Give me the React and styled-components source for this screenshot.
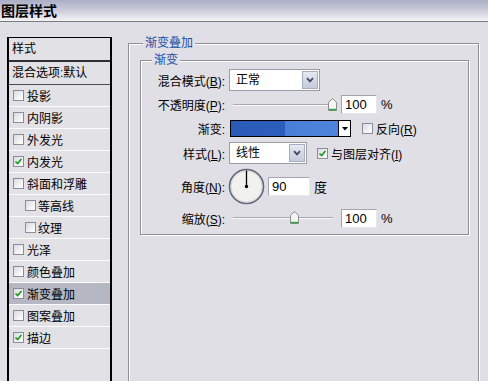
import React from 'react';
import styled, { createGlobalStyle } from 'styled-components';

const FONT = '"Liberation Sans", "Noto Sans CJK SC", sans-serif';

const GlobalStyle = createGlobalStyle`
  body {
    margin: 0;
    background: #e0dfe5;
    font-family: ${FONT};
  }
`;

const LAYERS = [
  { name: '投影' },
  { name: '内阴影' },
  { name: '外发光' },
  { name: '内发光', checked: true },
  { name: '斜面和浮雕' },
  { name: '等高线', indent: true },
  { name: '纹理', indent: true },
  { name: '光泽' },
  { name: '颜色叠加' },
  { name: '渐变叠加', checked: true, selected: true },
  { name: '图案叠加' },
  { name: '描边', checked: true },
];

const CheckBox = ({ checked }) => (
  <Box>
    {checked && (
      <svg width="9" height="9" viewBox="0 0 9 9">
        <path d="M1.5 4.5 L3.6 6.6 L7.5 2" fill="none" stroke="#1f9a22" strokeWidth="1.7" />
      </svg>
    )}
  </Box>
);

const Select = ({ value, width }) => (
  <SelectBox $w={width}>
    <SelectText>{value}</SelectText>
    <SelectButton>
      <svg width="8" height="6" viewBox="0 0 8 6">
        <path d="M1 1.2 L4 4.4 L7 1.2" fill="none" stroke="#3c4a6c" strokeWidth="1.8" />
      </svg>
    </SelectButton>
  </SelectBox>
);

const Slider = ({ value, width }) => (
  <SliderBox $w={width}>
    <Track />
    <Thumb style={{ left: `${value}px` }}>
      <svg width="9" height="13" viewBox="0 0 9 13">
        <path d="M0.5 4.2 L4.5 0.6 L8.5 4.2 V12.5 H0.5 Z" fill="#f4f4f0" stroke="#8b8d90" />
        <path d="M1 11.6 H8" stroke="#2fa640" strokeWidth="1.6" />
      </svg>
    </Thumb>
  </SliderBox>
);

const AngleDial = () => (
  <svg width="37" height="37" viewBox="0 0 37 37">
    <circle cx="18.5" cy="18.5" r="17" fill="#f1f1ee" stroke="#5f6478" strokeWidth="1.6" />
    <circle cx="18.5" cy="18.5" r="15.6" fill="none" stroke="#c9cad2" strokeWidth="0.8" />
    <line x1="18.5" y1="18.5" x2="18.5" y2="2.5" stroke="#000" strokeWidth="1.3" />
    <circle cx="18.5" cy="18.5" r="1.7" fill="#000" />
  </svg>
);

const App = () => (
  <>
    <GlobalStyle />
    <Dialog>
      <TitleBar>图层样式</TitleBar>
      <Body>
        <StylePanel>
          <PanelHeader>样式</PanelHeader>
          <BlendRow>混合选项:默认</BlendRow>
          {LAYERS.map((l) => (
            <ListRow key={l.name} $indent={l.indent} $selected={l.selected}>
              <CheckBox checked={l.checked} />
              <span>{l.name}</span>
            </ListRow>
          ))}
        </StylePanel>

        <OuterGroup>
          <GroupLegend $ml={3}>渐变叠加</GroupLegend>
          <InnerGroup>
            <GroupLegend $ml={11}>渐变</GroupLegend>

            <FormRow $h={24}>
              <FieldLabel>
                混合模式(<u>B</u>):
              </FieldLabel>
              <Control $ml={4}>
                <Select value="正常" width={91} />
              </Control>
            </FormRow>

            <FormRow $h={25}>
              <FieldLabel>
                不透明度(<u>P</u>):
              </FieldLabel>
              <Control $ml={8}>
                <Slider value={95} width={104} />
              </Control>
              <NumInput $ml={4} $w={36}>100</NumInput>
              <Unit>%</Unit>
            </FormRow>

            <FormRow $h={23}>
              <FieldLabel>渐变:</FieldLabel>
              <Control $ml={5}>
                <GradientBar />
                <GradientArrow>
                  <svg width="6" height="4" viewBox="0 0 6 4">
                    <path d="M0 0 H6 L3 3.5 Z" fill="#000" />
                  </svg>
                </GradientArrow>
              </Control>
              <Control $ml={11}>
                <CheckBox />
                <CheckLabel>
                  反向(<u>R</u>)
                </CheckLabel>
              </Control>
            </FormRow>

            <FormRow $h={26}>
              <FieldLabel>
                样式(<u>L</u>):
              </FieldLabel>
              <Control $ml={4}>
                <Select value="线性" width={78} />
              </Control>
              <Control $ml={10}>
                <CheckBox checked />
                <CheckLabel>
                  与图层对齐(<u>I</u>)
                </CheckLabel>
              </Control>
            </FormRow>

            <FormRow $h={41}>
              <FieldLabel>
                角度(<u>N</u>):
              </FieldLabel>
              <Control $ml={3}>
                <AngleDial />
              </Control>
              <NumInput $ml={3} $w={42}>90</NumInput>
              <Unit>度</Unit>
            </FormRow>

            <FormRow $h={22}>
              <FieldLabel>
                缩放(<u>S</u>):
              </FieldLabel>
              <Control $ml={8}>
                <Slider value={57} width={104} />
              </Control>
              <NumInput $ml={4} $w={36}>100</NumInput>
              <Unit>%</Unit>
            </FormRow>
          </InnerGroup>
        </OuterGroup>
      </Body>
    </Dialog>
  </>
);

const Dialog = styled.div`
  width: 488px;
  height: 381px;
  overflow: hidden;
  display: flex;
  flex-direction: column;
  background: #e0dfe5;
  color: #000;
  font-size: 12px;
`;

const TitleBar = styled.div`
  height: 21px;
  flex-shrink: 0;
  padding-left: 1px;
  line-height: 21px;
  font-size: 14px;
  font-weight: bold;
  font-family: "Noto Sans CJK SC", sans-serif;
  background: linear-gradient(to bottom, #abaec5 0%, #cfd0dc 55%, #f5f5f8 100%);
  border-bottom: 1px solid #7b7b83;
`;

const Body = styled.div`
  display: flex;
  align-items: flex-start;
  flex: 1;
  min-height: 0;
  padding-left: 7px;
`;

const StylePanel = styled.div`
  flex-shrink: 0;
  box-sizing: border-box;
  width: 105px;
  height: 400px;
  margin-top: 15px;
  display: flex;
  flex-direction: column;
  background: #e2e1e6;
  border-top: 1px solid #000;
  border-left: 2px solid #000;
  border-right: 2px solid #000;
`;

const PanelHeader = styled.div`
  height: 22px;
  line-height: 22px;
  padding-left: 3px;
  border-bottom: 2px solid #2e2e33;
`;

const BlendRow = styled.div`
  height: 22px;
  line-height: 22px;
  padding-left: 3px;
  border-bottom: 1px solid #4a4a52;
`;

const ListRow = styled.div`
  height: 21px;
  display: flex;
  align-items: center;
  gap: ${(p) => (p.$indent ? 2 : 3)}px;
  padding-left: ${(p) => (p.$indent ? 16 : 4)}px;
  border-bottom: 1px solid #fbfbfd;
  background: ${(p) => (p.$selected ? '#b5b7c3' : 'transparent')};
`;

const Box = styled.span`
  box-sizing: border-box;
  width: 11px;
  height: 11px;
  flex-shrink: 0;
  display: inline-flex;
  align-items: center;
  justify-content: center;
  border: 1px solid #8a8c9c;
  background: linear-gradient(135deg, #d9d9df 0%, #f6f6f8 70%, #ffffff 100%);
`;

const OuterGroup = styled.fieldset`
  flex-shrink: 0;
  box-sizing: border-box;
  width: 351px;
  height: 380px;
  margin: 14px 0 0 16px;
  padding: 2px 9px 0 11px;
  min-width: 0;
  border: 1px solid #8f8f98;
  box-shadow: inset 1px 1px 0 #fff, 1px 1px 0 #fff;
`;

const GroupLegend = styled.legend`
  margin-left: ${(p) => p.$ml}px;
  padding: 0 2px;
  line-height: 15px;
  font-size: 12px;
  color: #1d4ea6;
  background: #e0dfe5;
`;

const InnerGroup = styled.fieldset`
  box-sizing: border-box;
  width: 329px;
  margin: 0;
  padding: 0 0 5px 0;
  min-width: 0;
  border: 1px solid #8f8f98;
  box-shadow: inset 1px 1px 0 #fff, 1px 1px 0 #fff;
`;

const FormRow = styled.div`
  height: ${(p) => p.$h}px;
  display: flex;
  align-items: center;
`;

const FieldLabel = styled.span`
  width: 84px;
  flex-shrink: 0;
  text-align: right;
  white-space: nowrap;
`;

const Control = styled.div`
  display: flex;
  align-items: center;
  margin-left: ${(p) => p.$ml}px;
`;

const SelectBox = styled.div`
  box-sizing: border-box;
  width: ${(p) => p.$w}px;
  height: 22px;
  display: flex;
  align-items: stretch;
  background: #fff;
  border: 1px solid #9b9daa;
  padding: 1px;
`;

const SelectText = styled.span`
  flex: 1;
  padding-left: 5px;
  line-height: 18px;
`;

const SelectButton = styled.span`
  box-sizing: border-box;
  width: 16px;
  display: flex;
  align-items: center;
  justify-content: center;
  border: 1px solid #a9adc2;
  background: linear-gradient(to bottom, #e6e8f2, #c6cadb);
`;

const SliderBox = styled.div`
  position: relative;
  width: ${(p) => p.$w}px;
  height: 14px;
`;

const Track = styled.div`
  position: absolute;
  left: 0;
  right: 4px;
  top: 6px;
  height: 1px;
  background: #a8a8ae;
  border-bottom: 1px solid #fafafa;
`;

const Thumb = styled.div`
  position: absolute;
  top: 0;
  width: 9px;
  height: 13px;
  display: flex;
`;

const NumInput = styled.div`
  box-sizing: border-box;
  width: ${(p) => p.$w}px;
  height: 19px;
  margin-left: ${(p) => p.$ml}px;
  padding-left: 3px;
  line-height: 17px;
  font-size: 13px;
  background: #fff;
  border: 1px solid #a4a4ae;
  border-right-color: #e8e8ec;
  border-bottom-color: #e8e8ec;
`;

const Unit = styled.span`
  margin-left: 4px;
  font-size: 13px;
`;

const GradientBar = styled.div`
  box-sizing: border-box;
  width: 109px;
  height: 17px;
  border: 1px solid #000;
  background: linear-gradient(to right, #2b5bb8 0%, #2c5dbb 50%, #4a7fd8 51%, #4e84dc 100%);
`;

const GradientArrow = styled.div`
  box-sizing: border-box;
  width: 12px;
  height: 17px;
  display: flex;
  align-items: center;
  justify-content: center;
  border: 1px solid #000;
  border-left: none;
  background: #fff;
`;

const CheckLabel = styled.span`
  margin-left: 3px;
  white-space: nowrap;
`;

export default App;
